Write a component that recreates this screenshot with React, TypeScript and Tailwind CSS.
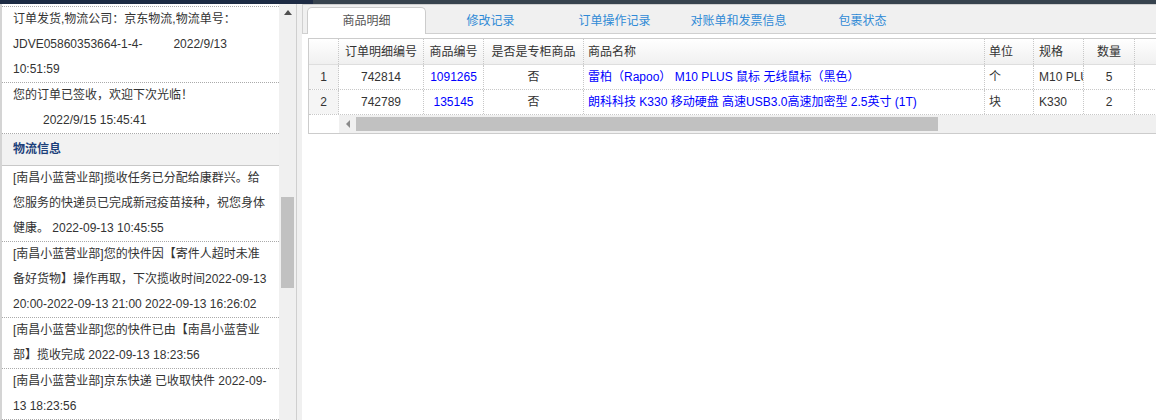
import React from 'react';

type Row = {
  no: number;
  id: string;
  code: string;
  zg: string;
  name: string;
  unit: string;
  spec: string;
  qty: string;
};

const rows: Row[] = [
  { no: 1, id: '742814', code: '1091265', zg: '否', name: '雷柏（Rapoo） M10 PLUS 鼠标 无线鼠标（黑色）', unit: '个', spec: 'M10 PLUS', qty: '5' },
  { no: 2, id: '742789', code: '135145', zg: '否', name: '朗科科技 K330 移动硬盘 高速USB3.0高速加密型 2.5英寸 (1T)', unit: '块', spec: 'K330', qty: '2' },
];

const tabs = ['商品明细', '修改记录', '订单操作记录', '对账单和发票信息', '包裹状态'];

const logs: string[][] = [
  ['[南昌小蓝营业部]揽收任务已分配给康群兴。给', '您服务的快递员已完成新冠疫苗接种，祝您身体', '健康。 2022-09-13 10:45:55'],
  ['[南昌小蓝营业部]您的快件因【寄件人超时未准', '备好货物】操作再取，下次揽收时间2022-09-13', '20:00-2022-09-13 21:00 2022-09-13 16:26:02'],
  ['[南昌小蓝营业部]您的快件已由【南昌小蓝营业', '部】揽收完成 2022-09-13 18:23:56'],
  ['[南昌小蓝营业部]京东快递 已收取快件 2022-09-', '13 18:23:56'],
];

const cell = 'h-full flex items-center border-r border-dotted border-[#c8c8c8] overflow-hidden whitespace-nowrap';

function LeftPanel() {
  return (
    <div className="w-[279px] h-full bg-white border-l-2 border-[#d4d4d4] overflow-hidden text-[12px] leading-[25px] text-[#333]">
      <div className="h-[2px]" />
      <div className="border-t border-dotted border-[#aaa]" />
      <div className="pl-[11px] border-b border-dotted border-[#aaa] whitespace-nowrap">
        <div>订单发货,物流公司：京东物流,物流单号：</div>
        <div>
          JDVE05860353664-1-4-<span className="ml-[31px]">2022/9/13</span>
        </div>
        <div>10:51:59</div>
      </div>
      <div className="pl-[11px] border-b border-dotted border-[#aaa] whitespace-nowrap">
        <div>您的订单已签收，欢迎下次光临！</div>
        <div className="pl-[30px]">2022/9/15 15:45:41</div>
      </div>
      <div className="h-[32px] pl-[11px] flex items-center bg-[#f2f2f2] border-b border-[#c8c8c8] font-bold text-[#1c3f7a]">
        物流信息
      </div>
      {logs.map((lines, i) => (
        <div key={i} className="pl-[11px] border-b border-dotted border-[#aaa] whitespace-nowrap">
          {lines.map((l, j) => (
            <div key={j}>{l}</div>
          ))}
        </div>
      ))}
    </div>
  );
}

function VScrollbar() {
  return (
    <div className="w-[18px] h-full bg-[#f0f0f0] border-r border-[#cfcfcf] flex flex-col items-center">
      <div className="h-[17px] w-full flex items-center justify-center">
        <svg width="8" height="5" viewBox="0 0 8 5">
          <path d="M0 5 L4 0 L8 5 Z" fill="#505050" />
        </svg>
      </div>
      <div className="h-[176px]" />
      <div className="w-[13px] h-[91px] bg-[#c1c1c1] -ml-px" />
    </div>
  );
}

function Grid() {
  return (
    <div className="ml-[6px] mt-[4px] w-[860px] border border-[#cccccc] text-[12px] text-[#333]">
      <div className="h-[26px] flex border-b border-[#dedede] bg-linear-to-b from-white to-[#f0f0f0]">
        <div className={`${cell} w-[30px]`} />
        <div className={`${cell} w-[85px] justify-center`}>订单明细编号</div>
        <div className={`${cell} w-[60px] justify-center`}>商品编号</div>
        <div className={`${cell} w-[100px] justify-center`}>是否是专柜商品</div>
        <div className={`${cell} w-[401px] pl-[4px]`}>商品名称</div>
        <div className={`${cell} w-[49px] pl-[4px]`}>单位</div>
        <div className={`${cell} w-[50px] pl-[5px]`}>规格</div>
        <div className={`${cell} w-[51px] justify-center`}>数量</div>
      </div>
      {rows.map((r) => (
        <div key={r.no} className="h-[25px] flex border-b border-dotted border-[#c8c8c8]">
          <div className={`${cell} w-[30px] justify-center bg-[#f5f5f5]`}>{r.no}</div>
          <div className={`${cell} w-[85px] justify-center`}>{r.id}</div>
          <div className={`${cell} w-[60px] justify-center text-[#0000ff]`}>{r.code}</div>
          <div className={`${cell} w-[100px] justify-center`}>{r.zg}</div>
          <div className={`${cell} w-[401px] pl-[4px] text-[#0000ff]`}>{r.name}</div>
          <div className={`${cell} w-[49px] pl-[4px]`}>{r.unit}</div>
          <div className={`${cell} w-[50px] pl-[5px]`}>{r.spec}</div>
          <div className={`${cell} w-[51px] justify-center`}>{r.qty}</div>
        </div>
      ))}
      <div className="h-[18px] flex">
        <div className="w-[30px] h-full bg-white" />
        <div className="flex-1 h-full bg-[#f0f0f0] flex items-center">
          <div className="w-[17px] h-full flex items-center justify-center">
            <svg width="4" height="8" viewBox="0 0 4 8">
              <path d="M4 0 L0 4 L4 8 Z" fill="#8a8a8a" />
            </svg>
          </div>
          <div className="w-[582px] h-[14px] bg-[#c1c1c1]" />
        </div>
      </div>
    </div>
  );
}

function RightPanel() {
  return (
    <div className="flex-1 h-full bg-[#f0f0f0] pl-[5px] overflow-hidden">
      <div className="h-full flex flex-col bg-white">
        <div className="h-[30px] flex items-end gap-[5px] pl-[4px] bg-[#f0f0f0] border-t border-l border-b border-[#d0d0d0]">
          {tabs.map((t, i) =>
            i === 0 ? (
              <div
                key={t}
                className="w-[119px] h-[27px] -mb-px flex items-center justify-center bg-white border border-b-0 border-[#cccccc] rounded-t-[5px] text-[12px] text-[#555]"
              >
                {t}
              </div>
            ) : (
              <div key={t} className="w-[119px] h-[27px] -mb-px flex items-center justify-center text-[12px] text-[#2f8ad6]">
                {t}
              </div>
            ),
          )}
        </div>
        <Grid />
      </div>
    </div>
  );
}

export default function App() {
  return (
    <div className="w-[1156px] h-[420px] overflow-hidden flex flex-col bg-white font-['Liberation_Sans','Noto_Sans_CJK_SC',sans-serif]">
      <div className="h-[4px] flex">
        <div className="w-[313px] bg-[#1d2b44]" />
        <div className="flex-1 bg-[#37434e]" />
      </div>
      <div className="flex-1 flex min-h-0">
        <LeftPanel />
        <VScrollbar />
        <RightPanel />
      </div>
    </div>
  );
}
